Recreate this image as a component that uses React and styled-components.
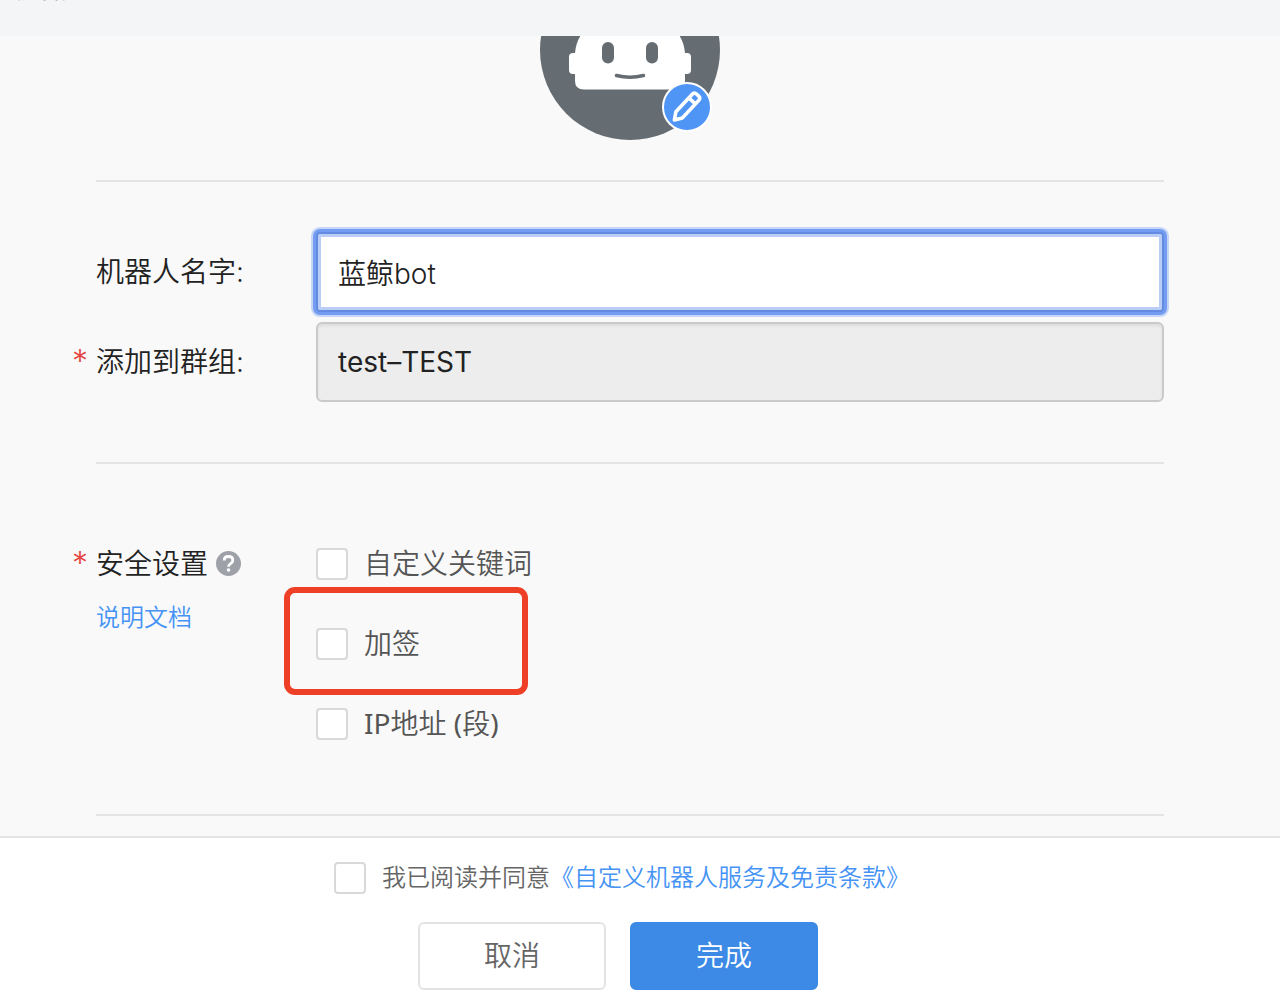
import React, { useState } from "react";
import styled, { createGlobalStyle } from "styled-components";

const GlobalStyle = createGlobalStyle`
  *, *::before, *::after { box-sizing: border-box; }
  body {
    margin: 0;
    background: #ffffff;
    color: #222222;
    font-family: Inter, "Noto Sans CJK SC", sans-serif;
    font-weight: 350;
  }
  input, button { font: inherit; color: inherit; }
`;

const Page = styled.div`
  display: flex;
  flex-direction: column;
  min-height: 100vh;
`;

const Header = styled.header`
  display: flex;
  align-items: flex-start;
  height: 36px;
  padding: 0 12px;
  background: #f4f5f7;
  overflow: hidden;
`;

const Title = styled.h1`
  margin: -28px 0 0;
  font-size: 28px;
  line-height: 32px;
  font-weight: 350;
  color: #888888;
`;

const Main = styled.main`
  flex: 1;
  padding: 0 116px 20px 96px;
  background: #f9f9f9;
`;

const Section = styled.section`
  padding: ${(p) => p.$pad};
  border-bottom: 2px solid #e3e4e5;
`;

const AvatarClip = styled.div`
  display: flex;
  justify-content: center;
  align-items: flex-end;
  height: 104px;
  overflow: hidden;
`;

const AvatarButton = styled.button`
  flex: none;
  padding: 0;
  border: 0;
  background: none;
  cursor: pointer;
  svg { display: block; }
`;

const FieldRow = styled.div`
  display: flex;
  align-items: center;
  & + & { margin-top: 10px; }
`;

const LabelCell = styled.div`
  position: relative;
  flex: none;
  width: 220px;
  font-size: 28px;
  line-height: 32px;
`;

const Required = styled.span`
  position: absolute;
  left: -24px;
  font-size: 32px;
  color: #e64340;
`;

const TextInput = styled.input`
  flex: 1;
  min-width: 0;
  height: 80px;
  padding: 0 20px;
  border: 2px solid #cacaca;
  border-radius: 6px;
  background: #ffffff;
  font-size: 28px;
  outline: none;
  &:disabled {
    background: #ededed;
    box-shadow: inset 0 2px 3px rgba(0, 0, 0, 0.07);
    color: #222222;
    font-weight: 400;
    opacity: 1;
  }
  &:not(:disabled) {
    border-color: #638bdf;
    border-radius: 4px;
    box-shadow: inset 0 0 0 3px #b9cdf6, 0 0 0 3px #749df2, 0 0 0 5px #c4d5f8;
  }
`;

const SecurityGrid = styled.div`
  display: flex;
  align-items: flex-start;
`;

const SecurityTitle = styled.div`
  display: flex;
  align-items: center;
  gap: 8px;
`;

const HelpButton = styled.button`
  display: flex;
  padding: 0;
  border: 0;
  background: none;
`;

const Link = styled.a`
  color: #4593f5;
  text-decoration: none;
`;

const DocLink = styled(Link)`
  display: inline-block;
  margin-top: 22px;
  font-size: 24px;
  line-height: 32px;
`;

const Options = styled.div`
  display: flex;
  flex-direction: column;
  align-items: flex-start;
  gap: 48px;
`;

const Option = styled.label`
  position: relative;
  display: flex;
  align-items: center;
  gap: 16px;
  font-size: ${(p) => p.$size || 28}px;
  line-height: 32px;
  color: ${(p) => p.$color || "#555555"};
`;

const Latin = styled.span`
  font-family: "Noto Sans", sans-serif;
  font-weight: 400;
  line-height: 1;
`;

const Highlight = styled.span`
  position: absolute;
  top: -41px;
  left: -32px;
  width: 244px;
  height: 108px;
  border: 6px solid #ee4027;
  border-radius: 11px;
  pointer-events: none;
`;

const Checkbox = styled.input`
  appearance: none;
  flex: none;
  width: 32px;
  height: 32px;
  margin: 0;
  border: 2px solid #d9d9d9;
  border-radius: 4px;
  background: #ffffff;
  &:checked { background: #3c8ae6; border-color: #3c8ae6; }
`;

const Footer = styled.footer`
  display: flex;
  flex-direction: column;
  align-items: center;
  gap: 28px;
  padding: 24px 44px 8px 0;
  border-top: 2px solid #e3e4e5;
  background: #ffffff;
`;

const Agreement = styled.div`
  display: flex;
  align-items: center;
  padding-left: 8px;
  font-size: 24px;
  line-height: 32px;
`;

const Actions = styled.div`
  display: flex;
  gap: 24px;
`;

const Button = styled.button`
  width: 188px;
  height: 68px;
  padding: 0;
  border: 2px solid ${(p) => (p.$primary ? "#3c8ae6" : "#e3e3e3")};
  border-radius: 6px;
  background: ${(p) => (p.$primary ? "#3c8ae6" : "#ffffff")};
  color: ${(p) => (p.$primary ? "#ffffff" : "#666666")};
  font-size: 28px;
  line-height: 32px;
`;

function RobotAvatar() {
  return (
    <svg width="184" height="180" viewBox="-2 0 184 180" aria-hidden="true">
      <circle cx="90" cy="90" r="90" fill="#656d72" />
      <path
        fill="#ffffff"
        d="M35 93q1-12 8-21Q55 55 90 55t47 17q7 9 8 21h2q4 0 4 4v13q0 4-4 4h-2v7q0 8.500-9 8.500H44q-9 0-9-8.500v-7h-2q-4 0-4-4V97q0-4 4-4z"
      />
      <rect x="62" y="82" width="12" height="21.500" rx="6" fill="#656d72" />
      <rect x="106" y="82" width="12" height="21.500" rx="6" fill="#656d72" />
      <path d="M76.500 115.500q13.500 3.500 27 0" fill="none" stroke="#656d72" strokeWidth="3.500" strokeLinecap="round" />
      <circle cx="147" cy="147" r="24" fill="#4e95f5" stroke="#ffffff" strokeWidth="2" />
      <g transform="translate(146 147.500) rotate(43)" fill="none" stroke="#ffffff" strokeWidth="3.600" strokeLinejoin="round">
        <path d="M-4.500-14q0-3 3-3h3q3 0 3 3V10L0 17-4.500 10zM-4.500-9h9" />
      </g>
    </svg>
  );
}

function HelpIcon() {
  return (
    <svg width="26" height="26" viewBox="1 1 26 26" aria-hidden="true">
      <circle cx="13.500" cy="13.500" r="12.500" fill="#9ea2a8" />
      <path d="M9.200 10.500Q9.200 6.500 13.500 6.500t4.300 3.800q0 2-2.200 3.300-2.100 1.200-2.100 3.200" fill="none" stroke="#ffffff" strokeWidth="2.800" />
      <circle cx="13.500" cy="20" r="1.800" fill="#ffffff" />
    </svg>
  );
}

export default function App() {
  const [name, setName] = useState("蓝鲸bot");
  return (
    <Page>
      <GlobalStyle />
      <Header>
        <Title>机器人头像</Title>
      </Header>
      <Main>
        <Section $pad="0 0 40px">
          <AvatarClip>
            <AvatarButton type="button" aria-label="修改头像">
              <RobotAvatar />
            </AvatarButton>
          </AvatarClip>
        </Section>
        <Section $pad="50px 0 60px">
          <FieldRow>
            <LabelCell>
              <label htmlFor="robot-name">机器人名字:</label>
            </LabelCell>
            <TextInput id="robot-name" value={name} onChange={(e) => setName(e.target.value)} />
          </FieldRow>
          <FieldRow>
            <LabelCell>
              <Required>*</Required>
              <label htmlFor="robot-group">添加到群组:</label>
            </LabelCell>
            <TextInput id="robot-group" value="test–TEST" disabled readOnly />
          </FieldRow>
        </Section>
        <Section $pad="84px 0 74px">
          <SecurityGrid>
            <LabelCell>
              <Required>*</Required>
              <SecurityTitle>
                安全设置
                <HelpButton type="button" aria-label="帮助">
                  <HelpIcon />
                </HelpButton>
              </SecurityTitle>
              <DocLink href="#docs">说明文档</DocLink>
            </LabelCell>
            <Options>
              <Option>
                <Checkbox type="checkbox" />
                自定义关键词
              </Option>
              <Option>
                <Checkbox type="checkbox" />
                加签
                <Highlight />
              </Option>
              <Option>
                <Checkbox type="checkbox" />
                <span>
                  <Latin>IP</Latin>地址<Latin> (</Latin>段<Latin>)</Latin>
                </span>
              </Option>
            </Options>
          </SecurityGrid>
        </Section>
      </Main>
      <Footer>
        <Agreement>
          <Option $size={24} $color="#666666">
            <Checkbox type="checkbox" />
            我已阅读并同意
          </Option>
          <Link href="#terms">《自定义机器人服务及免责条款》</Link>
        </Agreement>
        <Actions>
          <Button type="button">取消</Button>
          <Button type="button" $primary>完成</Button>
        </Actions>
      </Footer>
    </Page>
  );
}
